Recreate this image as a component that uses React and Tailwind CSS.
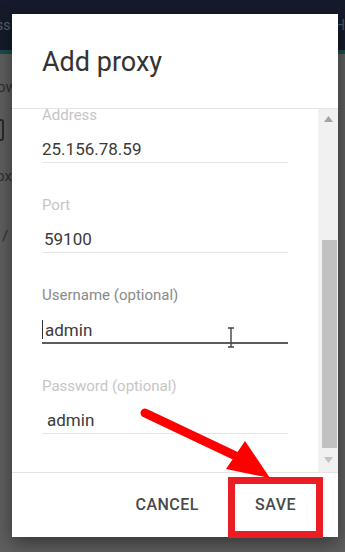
import React from 'react'

const fields = [
  {label: 'Address', value: '25.156.78.59', indent: 'pl-0'},
  {label: 'Port', value: '59100', indent: 'pl-[2px]'},
  {label: 'Username (optional)', value: 'admin', focused: true},
  {label: 'Password (optional)', value: 'admin', indent: 'pl-[5px]'},
]

const Field = ({field, first}) => {
  return (
    <div className={first ? '' : 'mt-[32px]'}>
      <div className={'text-[15px] leading-[20px] ' + (field.focused ? 'text-[#8a8a8a]' : 'text-[#c6c6c6]')}>
        {field.label}
      </div>
      {field.focused ? (
        <div className="mt-[14px] pb-[2px] border-b-2 border-[#5c5c5c] flex items-center h-[25px] relative">
          <span className="w-[1px] h-[19px] bg-[#333]"></span>
          <span className="pl-[2px] text-[17px] leading-[20px] text-[#3a3a3a]">{field.value}</span>
          {/* mouse pointer, text cursor */}
          <svg className="absolute left-[184px] top-[8px]" width="10" height="22" viewBox="0 0 10 22">
            <path d="M2 1h6M5 1v19M2 20h6" stroke="#444" strokeWidth="1.4" fill="none" />
          </svg>
        </div>
      ) : (
        <div className={'mt-[14px] pb-[3px] border-b border-[#e6e6e6] text-[17px] leading-[20px] text-[#3a3a3a] ' + field.indent}>
          {field.value}
        </div>
      )}
    </div>
  )
}

const Scrollbar = () => {
  return (
    <div className="w-[20px] bg-[#f1f1f1] flex flex-col items-center">
      <div className="h-[20px] flex items-center justify-center">
        <svg width="9" height="6" viewBox="0 0 9 6"><path d="M0 6L4.5 0L9 6z" fill="#a3a3a3" /></svg>
      </div>
      <div className="mt-[111px] w-[15px] ml-[3px] h-[208px] bg-[#c1c1c1]"></div>
      <div className="flex-1 flex items-center justify-center">
        <svg width="9" height="6" viewBox="0 0 9 6"><path d="M0 0L4.5 6L9 0z" fill="#c2c2c2" /></svg>
      </div>
    </div>
  )
}

const App = () => {
  return (
    <div className="relative w-[345px] h-[552px] overflow-hidden bg-[#5f5f5f]" style={{fontFamily: 'Roboto, "Liberation Sans", Arial, sans-serif'}}>
      {/* dimmed page behind the modal */}
      <div className="h-[50px] bg-[#151b2a] flex items-center justify-between">
        <span className="-ml-[4px] text-[14px] text-[#5b6272]">ss</span>
        <span className="text-[14px] text-[#4e5666]">H</span>
      </div>
      <div className="h-[4px] bg-[#1f4a4a]"></div>
      <div className="flex flex-col items-start text-[#2f2f2f] text-[15px]">
        <span className="-ml-[3px] mt-[22px]">ow</span>
        <span className="-ml-[10px] mt-[20px] w-[14px] h-[22px] border-2 border-[#2a2a2a] rounded-[3px]"></span>
        <span className="-ml-[4px] mt-[24px]">ox</span>
        <span className="ml-[2px] mt-[38px]">/</span>
      </div>

      {/* modal */}
      <div className="absolute left-[12px] top-[14px] w-[326px] h-[523px] bg-white flex flex-col shadow-[0_6px_18px_rgba(0,0,0,0.45)]">
        <div className="h-[95px] border-b border-[#e4e4e4] pt-[32px] pl-[30px]">
          <div className="text-[27px] leading-[32px] text-[#333]">Add proxy</div>
        </div>
        <div className="h-[363px] flex">
          <div className="flex-1 overflow-hidden pl-[30px] pr-[30px]">
            <div className="-mt-[4px]">
              {fields.map((f, i) => <Field key={f.label} field={f} first={i === 0} />)}
            </div>
          </div>
          <Scrollbar />
        </div>
        <div className="h-[65px] border-t border-[#e4e4e4] flex items-center justify-end pr-[42px] gap-[56px]">
          <span className="text-[16px] font-medium tracking-[0.5px] text-[#4a4a4a]">CANCEL</span>
          <span className="text-[16px] font-medium tracking-[0.5px] text-[#4a4a4a]">SAVE</span>
        </div>
      </div>

      {/* red annotation: box and arrow */}
      <div className="absolute left-[228px] top-[477px] w-[95px] h-[61px] border-[7px] border-[#ea1d25]"></div>
      <svg className="absolute left-0 top-0" width="345" height="552" viewBox="0 0 345 552">
        <line x1="145" y1="413" x2="240" y2="458" stroke="#ff0000" strokeWidth="9" strokeLinecap="round" />
        <path d="M226 469L245 441L270 478z" fill="#ff0000" />
      </svg>
    </div>
  )
}

export default App
